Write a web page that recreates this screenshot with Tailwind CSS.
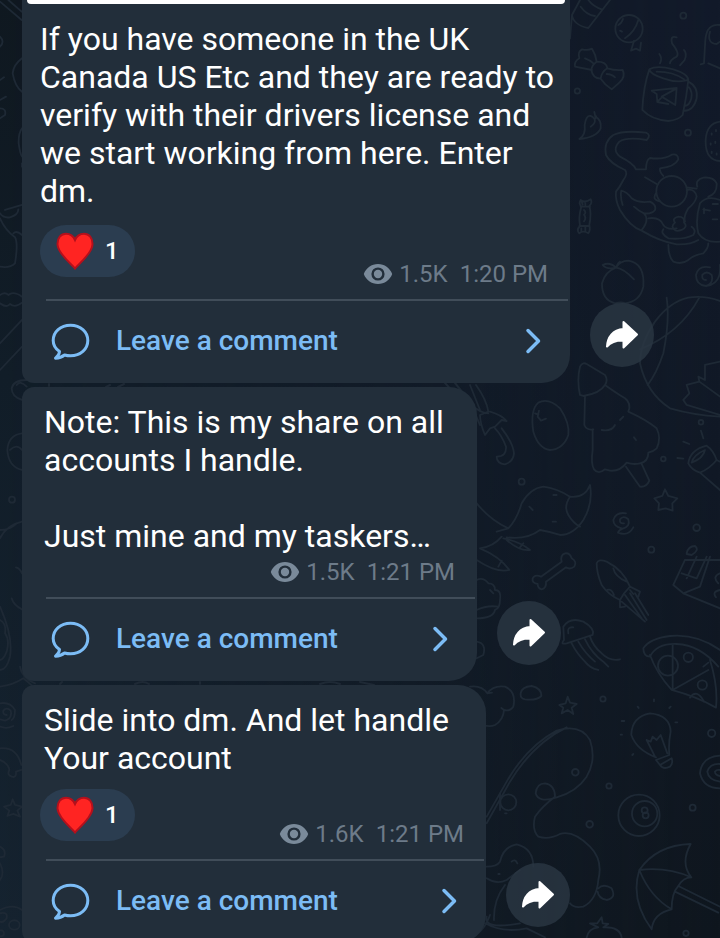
<!DOCTYPE html>
<html lang="en">
<head>
  <meta charset="UTF-8">
  <meta name="viewport" content="width=device-width, initial-scale=1.0">
  <title>Channel</title>
  <script src="https://cdn.jsdelivr.net/npm/@tailwindcss/browser@4"></script>
</head>
<body class="bg-[#121a27] font-[Roboto,sans-serif] text-white">
  <!-- Shared icons -->
  <svg class="hidden">
    <symbol id="heart" viewBox="0 0 38 38">
      <path d="M19 36.500C16.500 33 2 22 1.500 12.500C1.200 6 5 1.800 10 1.800C14 1.800 17.500 4.500 19 8C20.500 4.500 24 1.800 28 1.800C33 1.800 36.800 6 36.500 12.500C36 22 21.500 33 19 36.500Z" fill="#ff2422" stroke="#b3101c" stroke-width="2"/>
    </symbol>
    <symbol id="eye" viewBox="0 0 30 22">
      <path fill="currentColor" fill-rule="evenodd" d="M15 1C8.500 1 3 5 .8 11C3 17 8.500 21 15 21S27 17 29.200 11C27 5 21.500 1 15 1ZM15 17.600A6.600 6.600 0 1 1 15 4.400A6.600 6.600 0 0 1 15 17.600Z"/>
      <circle cx="15" cy="11" r="4.200" fill="currentColor"/>
    </symbol>
    <symbol id="comment" viewBox="0 0 40 40">
      <path fill="none" stroke="currentColor" stroke-width="3" stroke-linejoin="round" d="M9.500 30.500C5.500 27.800 3.200 24 3.200 19.500C3.200 10.800 10.500 4.200 20.500 4.200S37.800 10.800 37.800 19.500S30.500 34.800 20.500 34.800C18.300 34.800 16.300 34.500 14.500 34C12 36 9 37 5.500 37.200C8 35.300 9.300 33.500 9.500 30.500Z"/>
    </symbol>
    <symbol id="chevron" viewBox="0 0 16 28">
      <path fill="none" stroke="currentColor" stroke-width="3.500" stroke-linecap="round" stroke-linejoin="round" d="M3 3.500L13.500 14L3 24.500"/>
    </symbol>
    <symbol id="share" viewBox="0 0 64 64">
      <path fill="#fff" stroke="#fff" stroke-width="2" stroke-linejoin="round" d="M33.500 19L47 31.500L33.500 44.500V37.500C26 37.300 21 38.800 17 43.500C17.500 34.500 22.500 26.800 33.500 26Z"/>
    </symbol>
  </svg>

  <div class="relative h-screen overflow-hidden">
    <!-- Wallpaper -->
    <svg class="absolute inset-0 w-full h-full" viewBox="0 0 720 938" preserveAspectRatio="xMaxYMin slice" aria-hidden="true">
      <defs>
        <linearGradient id="base" x1="0" y1="0" x2="0" y2="1">
          <stop offset="0" stop-color="#121a2a"/>
          <stop offset=".5" stop-color="#111926"/>
          <stop offset="1" stop-color="#0f161e"/>
        </linearGradient>
        <linearGradient id="side" x1="0" y1="0" x2="0" y2="1">
          <stop offset="0" stop-color="#0f1820"/>
          <stop offset=".4" stop-color="#111d28"/>
          <stop offset="1" stop-color="#152330"/>
        </linearGradient>
        <linearGradient id="fade" x1="0" y1="0" x2="1" y2="0">
          <stop offset="0" stop-color="#fff"/>
          <stop offset="1" stop-color="#000"/>
        </linearGradient>
        <mask id="sideMask"><rect width="720" height="938" fill="url(#fade)"/></mask>
      </defs>
      <rect width="720" height="938" fill="url(#base)"/>
      <rect width="720" height="938" fill="url(#side)" mask="url(#sideMask)"/>
      <g fill="none" stroke="#1e2935" stroke-width="5.500" stroke-linecap="round" stroke-linejoin="round">
        <!-- candy, mug, cat, peach -->
        <g transform="translate(560 0) scale(.3333)">
          <path d="M60 0L36 45Q40 75 85 84L150 0M36 45L30 115M62 20Q80 45 105 48M85 0Q100 20 125 28"/>
          <circle cx="207" cy="86" r="41"/><path d="M235 60Q225 95 195 115M175 75q10-5 14-18M180 92l6 3M222 122L213 152L228 146L240 152L243 128"/>
          <circle cx="370" cy="47" r="9"/><circle cx="52" cy="273" r="8"/><circle cx="384" cy="398" r="9"/>
          <path d="M96 210Q70 205 45 200Q42 185 58 175Q52 155 66 148Q85 152 96 146Q108 165 110 185Q140 185 142 205Q165 212 188 210Q198 230 178 248L155 268Q135 255 122 236Q98 235 94 210ZM110 185Q95 195 94 210M142 205Q125 215 122 236M75 175Q90 180 100 190M140 222Q155 222 165 232"/>
          <path d="M268 208Q250 260 247 330Q275 360 325 363Q355 360 368 345Q380 290 385 240M268 208Q290 195 340 208Q385 222 385 240Q350 250 310 235Q270 222 268 208ZM290 215Q340 215 372 238M385 245Q415 260 410 295Q400 335 370 332M387 262Q398 275 394 295Q388 318 374 318"/>
          <path d="M275 272L350 264L346 315L305 290L345 268M275 272L290 282L292 306L305 292M292 306L325 312"/>
          <path d="M298 162Q308 175 300 190M350 112Q330 105 336 130Q360 160 350 170Q330 180 330 190M372 150Q382 160 374 180L360 196"/>
          <path d="M480 75Q440 70 436 120L432 190L422 193M445 190L480 205M450 95Q440 130 470 132L480 125"/>
          <path d="M103 336L106 350Q125 360 122 385Q110 412 58 417Q78 405 74 375Q78 345 92 348Q98 350 104 358Q112 345 106 350M104 358Q108 370 92 380"/>
          <path d="M480 365Q440 370 437 420Q435 480 480 483M455 400v4M468 390v4M452 430v4M466 425v4M455 455v4M470 460v4"/>
          <path d="M260 420Q200 410 178 425Q155 450 180 470Q220 490 228 508L258 508Q258 480 270 474Q310 480 335 464Q355 460 355 478Q345 500 300 505Q298 515 310 528M260 420Q275 405 258 398Q190 390 160 405Q130 425 138 465Q150 490 195 510Q205 520 190 540Q180 560 168 575Q165 600 180 630Q210 680 245 692Q300 725 350 733Q390 735 415 720M255 532L290 552"/>
          <circle cx="335" cy="574" r="46"/>
          <path d="M188 615Q180 590 184 572Q200 575 215 595Q235 610 270 605Q290 615 285 630Q275 643 252 640Q235 632 222 620M252 640Q270 660 245 690M288 580Q275 600 300 604M265 655Q300 650 310 675Q320 690 350 685M380 570Q405 565 410 590Q405 610 385 625Q370 650 375 665M380 562L410 566M412 560Q405 540 430 533Q460 530 470 550Q472 580 445 590M480 600Q440 585 420 610Q405 660 415 700Q435 730 480 725M430 628L450 632M458 612h16M458 658h14M432 640v-15"/>
          <path d="M345 690Q330 680 345 668Q335 655 355 650Q375 650 372 668Q385 680 365 690Q350 695 345 690M310 688Q300 700 325 715Q370 720 400 705Q410 690 395 680M325 735Q325 770 340 785Q365 795 385 780Q400 765 430 760Q445 745 445 730"/>
          <path d="M62 600Q75 610 92 598Q98 608 88 618Q95 640 88 675Q92 690 85 700Q70 690 58 700Q48 690 60 678Q55 650 64 620Q55 610 62 600M62 620h28M58 678h28M72 630q8 8 0 14q8 10 0 20M64 602l4 12M76 605v10M64 685v10M76 682v12"/>
          <path d="M168 803Q135 815 126 850Q125 900 165 910Q185 905 195 910Q240 905 250 860Q255 790 205 782Q180 783 168 803Q190 805 222 838M168 803Q140 810 128 795Q150 785 168 803Q172 790 180 785"/>
          <path d="M438 840Q425 840 427 825Q440 810 455 825Q462 850 438 858Q408 855 408 825Q415 795 450 802M480 795Q485 850 440 858"/>
          <!-- ball -->
          <path d="M485 905Q435 885 385 893Q330 905 285 965Q240 1030 240 1090Q260 1180 330 1225Q400 1245 480 1250M320 893Q330 960 310 1060Q290 1120 263 1155M418 893Q360 1000 240 1048M480 1085L435 1095V1140L415 1130L418 1145L380 1155L388 1180L370 1200L380 1215L480 1245M418 1145L480 1190"/>
        </g>
        <!-- tree, umbrella handle, egg, fox, squid -->
        <g transform="translate(470 360) scale(.3333)">
          <path d="M330 105Q320 60 330 20Q338 5 350 12L405 45Q415 60 405 75Q390 100 340 108ZM345 108L343 195Q350 212 370 208M405 75Q440 100 465 115Q485 130 475 155Q530 180 560 205Q575 235 560 265Q550 275 535 278Q535 305 510 310Q490 315 470 308Q450 335 420 332L405 328Q385 345 372 328Q362 310 368 270V208M395 210Q425 215 435 195M450 180L460 170M468 320L510 380Q530 382 538 362L515 312M492 232l6 8"/>
          <path d="M190 215Q180 150 205 128Q235 112 270 145Q300 190 295 225Q280 268 240 270Q205 265 190 215M207 152L203 170L213 182L228 176M195 160L205 164"/>
          <path d="M18 75Q50 120 55 155L30 165Q30 190 45 225L60 205L75 200L95 180L110 183Q95 165 60 155M0 130Q30 160 55 160M75 205Q95 225 108 260Q110 290 80 290Q80 310 105 313Q130 305 132 280Q130 250 95 205M0 75L30 150"/>
          <circle cx="155" cy="365" r="9"/><circle cx="693" cy="187" r="7"/><circle cx="580" cy="297" r="7"/><circle cx="544" cy="569" r="9"/><circle cx="680" cy="503" r="10"/>
          <path d="M20 430Q60 480 115 505Q140 480 155 430Q180 385 220 380Q260 385 300 410Q345 415 360 375Q370 430 340 480Q310 525 270 525Q240 515 210 510Q170 540 110 532M300 410Q280 440 295 465Q310 490 330 500M80 515L115 505M30 565Q70 560 95 530M100 535Q150 545 180 570Q150 575 110 540M150 562L160 550M30 565Q90 590 118 630Q80 640 20 600M85 620L95 602M178 440L188 450M250 405h10M248 485h10"/>
          <path d="M213 650L275 605Q270 585 285 580Q300 578 305 595Q322 605 313 620Q300 630 288 622L228 665Q230 685 215 688Q203 685 203 672Q185 670 188 655Q195 642 213 650"/>
          <path d="M585 388L595 408L622 415L607 430L608 452L587 445L565 450L567 430L553 415L577 408Z"/>
          <path d="M462 490Q448 492 450 478Q460 465 475 478Q482 500 458 506Q430 500 430 480Q438 455 468 460M458 506Q446 510 444 518Q475 530 490 502"/>
          <path d="M380 610Q385 595 410 605Q460 630 480 680Q460 700 450 720Q415 705 395 675Q380 640 380 610M430 625Q435 650 470 665M412 690Q425 685 432 705M480 680L510 695L505 710M450 720V742L465 740M465 705L515 775M480 700L530 780M495 700L535 765M455 725L525 785M480 690L490 702"/>
          <path d="M655 310Q660 270 710 257Q730 270 740 300Q720 325 690 338Q665 330 655 310M665 308Q670 285 705 270Q700 295 665 308M690 338L750 390M740 300L750 305M693 212L700 235M640 245L658 252M622 294L640 296"/>
          <path d="M645 600L610 675L640 700L750 745M645 600L750 600M635 640L680 655L710 590M720 590L690 680L640 700M650 580Q655 558 675 558Q690 570 665 585L650 582M680 590L650 655M750 640Q725 650 745 670M750 690Q725 695 738 712"/>
          <path d="M20 660Q40 650 55 670Q75 670 75 690Q95 690 90 720Q90 745 75 750Q70 775 20 775M20 750Q50 735 85 740M60 690l10 10M20 845Q50 850 40 885L20 895"/>
          <path d="M280 800Q300 770 340 785Q375 805 368 825L290 850Q270 855 282 840ZM295 820Q290 800 310 802M305 850Q320 880 345 905Q360 925 385 930M325 845Q345 880 375 905M345 838Q365 880 400 905L415 920M360 830Q370 860 395 880Q420 905 450 898"/>
          <path d="M750 870Q680 820 600 828Q540 835 520 865Q520 890 540 890Q560 850 620 852Q690 855 745 920M540 885Q560 940 605 990Q680 1010 738 1043Q745 980 720 900M608 855V990L715 930"/>
          <circle cx="594" cy="917" r="30"/><circle cx="655" cy="892" r="14"/><circle cx="697" cy="975" r="14"/><path d="M660 1013Q680 985 702 1025M700 920L715 908"/>
        </g>
        <!-- cloud, rod, bulb, umbrella -->
        <g transform="translate(470 640) scale(.3333)">
          <path d="M0 140Q35 135 52 160Q70 135 105 140Q140 155 130 200Q120 215 102 210Q100 240 75 255Q60 262 40 255M52 160l14-2M102 210l-8-6M152 160Q155 140 185 138Q215 145 214 168Q200 182 165 178Q150 175 152 160"/>
          <path d="M293 170L300 188L320 192L305 203L310 222L293 210L275 220L280 203L268 195L287 190Z"/>
          <circle cx="399" cy="177" r="8"/><circle cx="316" cy="397" r="10"/><circle cx="417" cy="438" r="8"/><circle cx="359" cy="553" r="10"/><circle cx="668" cy="503" r="9"/><circle cx="725" cy="280" r="11"/>
          <path d="M50 550L120 425Q190 310 290 262M50 530L110 425Q170 320 260 272Q330 250 360 300Q380 360 350 410Q320 455 260 472Q205 490 197 460Q200 430 225 430Q255 435 255 470Q215 500 195 530Q185 570 205 590Q235 600 270 582Q310 570 360 620Q400 660 385 720Q380 780 340 800Q310 805 300 790M385 745Q400 730 425 745Q440 775 410 780Q385 775 383 755"/>
          <circle cx="115" cy="487" r="24"/><path d="M90 460v50M105 520h5"/>
          <path d="M558 352Q500 330 484 285Q485 230 540 220Q600 225 602 275Q595 310 598 345L558 360L570 375L605 355M570 375Q580 390 600 380Q610 370 605 355M530 300L555 350M530 300L542 305L548 290L560 300L572 285L592 340M552 178v6M503 200l3 4M602 200l-4 4M455 243h8M452 284h4M616 247h6M490 342l-3 3"/>
          <circle cx="507" cy="526" r="62"/><circle cx="524" cy="521" r="38"/><circle cx="524" cy="511" r="9"/><circle cx="527" cy="526" r="9"/>
          <path d="M750 445Q700 445 690 400Q695 350 750 347M750 425Q715 420 712 395Q720 370 750 372M750 408Q735 405 735 395Q740 388 750 390"/>
          <path d="M662 612Q560 615 508 690Q480 780 545 868Q550 820 605 808Q605 760 625 738Q640 712 664 712Q630 670 662 612ZM508 690Q590 680 664 712M508 690Q540 770 605 808M625 738L750 800M615 755L745 818"/>
          <path d="M90 665Q100 620 140 613Q190 625 190 680M50 680Q80 680 90 665M50 715Q80 735 110 720L150 690M125 665Q135 655 142 670M85 702h4M105 735Q70 780 72 840M50 830Q40 870 150 850M45 850Q100 880 170 865L225 892M0 893Q40 880 60 825"/>
          <path d="M350 893Q355 865 385 862L360 850L382 850L395 832L398 850L415 852L400 862Q450 860 455 893"/>
          <circle cx="648" cy="880" r="8"/>
        </g>
        <!-- left edge -->
        <g transform="scale(.3333)">
          <path d="M0 5L65 60M25 0L65 35M0 110Q15 125 0 140M66 175Q40 195 38 220Q45 260 66 275M0 240L12 232M0 300L18 290M0 325Q20 325 15 345L0 355M66 385Q55 400 56 430Q60 460 66 470M66 490V500"/>
          <path d="M0 640Q10 655 30 652Q55 645 55 628M15 630L66 615M0 655Q15 690 45 712Q55 730 45 790Q30 805 0 800M40 700Q50 690 66 705M0 885Q15 875 25 885Q40 872 66 890M0 910Q20 925 30 912Q45 925 66 908M0 1030L66 960M0 1110L66 1040M80 1140Q40 1140 35 1165Q35 1190 66 1200M80 1160Q60 1140 50 1155M66 1300Q25 1305 22 1350Q25 1400 66 1410M30 1350Q50 1330 66 1350"/>
        </g>
        <g transform="translate(0 470) scale(.3333)">
          <circle cx="36" cy="89" r="9"/>
          <path d="M0 205Q20 165 66 155M0 180Q30 180 50 160M48 292Q60 295 66 310M35 385Q40 405 66 418M0 410Q40 500 30 560Q20 600 0 600M0 450Q20 460 15 490Q30 510 20 545Q10 570 0 570M0 650Q40 645 70 625L100 650M60 590Q65 625 105 640"/>
          <path d="M20 735Q8 735 10 722Q20 710 32 722Q38 745 15 752L0 748M0 700Q30 695 45 720Q45 745 35 750M0 770Q20 778 40 768M0 835Q50 830 64 885M0 870Q25 880 28 900Q20 915 35 920Q50 925 48 905L64 900M38 988L45 1005L66 1010L52 1022L60 1040L40 1032L22 1038L28 1022L12 1010L32 1005Z"/>
          <path d="M0 1130Q20 1140 12 1160L0 1162M0 1180Q15 1210 0 1230M0 1320Q40 1300 66 1320M0 1330Q25 1325 20 1345Q10 1360 0 1355"/>
          <ellipse cx="43" cy="1365" rx="16" ry="14"/><circle cx="3" cy="1390" r="9"/>
        </g>
      </g>
      <!-- bits showing between the bubbles -->
      <path fill="none" stroke="#1e2935" stroke-width="2" stroke-linecap="round" d="M455 383Q470 400 480 425M445 383L462 402M49 384v2M106 387l4-2M118 387l6-3M60 684l2-2M135 684q8-4 14 0M200 682v2M320 684Q330 680 340 684M360 682l14 3"/>
    </svg>

    <main class="relative flex flex-col gap-1 pl-[22px]">
      <!-- Message 1 -->
      <div class="flex items-end gap-5">
        <article class="flex-1 max-w-[548px] bg-[#222e3a] rounded-bl-xl rounded-br-[28px]">
          <div class="h-1 mx-[5px] bg-white rounded-b-md"></div>
          <div class="pt-4 pl-[18px] pr-3">
            <p class="text-[32px] leading-[38px]">If you have someone in the UK Canada US Etc and they are ready to verify with their drivers license and we start working from here. Enter dm.</p>
            <div class="flex justify-between items-end pt-[15px] pr-[10px]">
              <button class="flex items-center gap-[11px] h-[52px] px-4 mb-[11px] rounded-full bg-[#2b3d50] text-2xl font-medium" aria-label="1 heart reaction">
                <svg class="size-[38px]"><use href="#heart"/></svg>
                <span>1</span>
              </button>
              <div class="flex items-center text-2xl leading-7 text-[#6d7b89]">
                <svg class="w-[30px] h-[22px] mr-[6px] text-[#7a8a9a]"><use href="#eye"/></svg>
                <span class="mr-3">1.5K</span>
                <time>1:20 PM</time>
              </div>
            </div>
          </div>
          <a href="#" class="flex items-center h-[84px] mt-[11px] ml-6 mr-[2px] pb-[2px] pl-1 pr-[27px] border-t-2 border-[#414d59] text-[#7cbcf5]">
            <svg class="size-10"><use href="#comment"/></svg>
            <span class="ml-[26px] text-[28px] font-medium">Leave a comment</span>
            <svg class="w-4 h-7 ml-auto"><use href="#chevron"/></svg>
          </a>
        </article>
        <button class="size-16 mb-4 rounded-full bg-[#2a3744]/80" aria-label="Share">
          <svg class="size-16"><use href="#share"/></svg>
        </button>
      </div>

      <!-- Message 2 -->
      <div class="flex items-end gap-5">
        <article class="flex-1 max-w-[455px] bg-[#222e3a] rounded-l-xl rounded-r-[28px]">
          <div class="pt-4 pl-[22px] pr-3">
            <p class="text-[32px] leading-[38px]">Note: This is my share on all accounts I handle.<br><br>Just mine and my taskers…</p>
            <div class="flex justify-end items-center pt-[3px] pr-[10px] text-2xl leading-7 text-[#6d7b89]">
              <svg class="w-[30px] h-[22px] mr-[6px] text-[#7a8a9a]"><use href="#eye"/></svg>
              <span class="mr-3">1.5K</span>
              <time>1:21 PM</time>
            </div>
          </div>
          <a href="#" class="flex items-center h-[84px] mt-[11px] ml-6 mr-[2px] pb-[2px] pl-1 pr-[27px] border-t-2 border-[#414d59] text-[#7cbcf5]">
            <svg class="size-10"><use href="#comment"/></svg>
            <span class="ml-[26px] text-[28px] font-medium">Leave a comment</span>
            <svg class="w-4 h-7 ml-auto"><use href="#chevron"/></svg>
          </a>
        </article>
        <button class="size-16 mb-4 rounded-full bg-[#2a3744]/80" aria-label="Share">
          <svg class="size-16"><use href="#share"/></svg>
        </button>
      </div>

      <!-- Message 3 -->
      <div class="flex items-end gap-5">
        <article class="flex-1 max-w-[464px] bg-[#222e3a] rounded-l-xl rounded-r-[28px]">
          <div class="pt-4 pl-[18px] pr-3">
            <p class="pl-1 text-[32px] leading-[38px]">Slide into dm. And let handle Your account</p>
            <div class="flex justify-between items-end pt-3 pr-[10px]">
              <button class="flex items-center gap-[11px] h-[52px] px-4 mb-[7px] rounded-full bg-[#2b3d50] text-2xl font-medium" aria-label="1 heart reaction">
                <svg class="size-[38px]"><use href="#heart"/></svg>
                <span>1</span>
              </button>
              <div class="flex items-center text-2xl leading-7 text-[#6d7b89]">
                <svg class="w-[30px] h-[22px] mr-[6px] text-[#7a8a9a]"><use href="#eye"/></svg>
                <span class="mr-3">1.6K</span>
                <time>1:21 PM</time>
              </div>
            </div>
          </div>
          <a href="#" class="flex items-center h-[84px] mt-[11px] ml-6 mr-[2px] pb-[2px] pl-1 pr-[27px] border-t-2 border-[#414d59] text-[#7cbcf5]">
            <svg class="size-10"><use href="#comment"/></svg>
            <span class="ml-[26px] text-[28px] font-medium">Leave a comment</span>
            <svg class="w-4 h-7 ml-auto"><use href="#chevron"/></svg>
          </a>
        </article>
        <button class="size-16 mb-4 rounded-full bg-[#2a3744]/80" aria-label="Share">
          <svg class="size-16"><use href="#share"/></svg>
        </button>
      </div>
    </main>
  </div>
</body>
</html>
